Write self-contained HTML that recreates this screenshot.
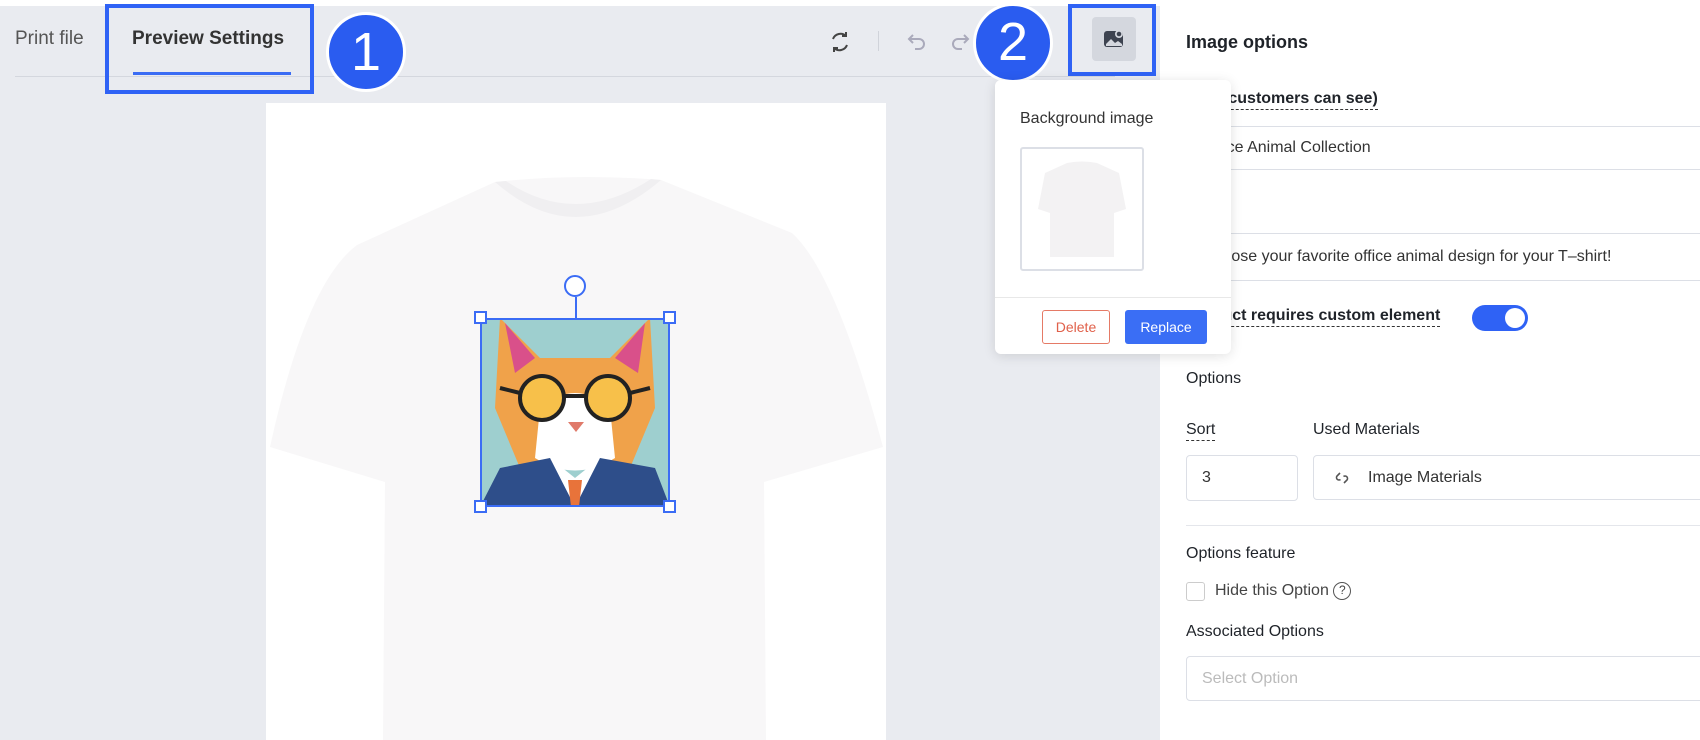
<!DOCTYPE html>
<html><head><meta charset="utf-8"><style>
*{box-sizing:border-box;margin:0;padding:0}
body{width:1700px;height:740px;overflow:hidden;background:#fff;font-family:"Liberation Sans",Arial,sans-serif;position:relative;color:#1f2329}
.a{position:absolute}
.left{left:0;top:6px;width:1160px;height:734px;background:#e9ebf0}
.lbl{font-size:16px;color:#1f2329;position:absolute;white-space:nowrap}
.dash{border-bottom:1px dashed #333;padding-bottom:2px}
.inp{position:absolute;border:1px solid #dcdfe6;border-radius:4px;background:#fff;font-size:16px;color:#333;padding-left:15px;display:flex;align-items:center}
</style></head><body>
<div class="a left"></div>
<div class="lbl" style="left:15px;top:28px;font-size:19px;color:#555">Print file</div>
<div class="lbl" style="left:132px;top:28px;font-size:19px;font-weight:bold;color:#333">Preview Settings</div>
<div class="a" style="left:133px;top:72px;width:158px;height:3px;background:#3a6cf4"></div>
<div class="a" style="left:15px;top:76px;width:1100px;height:1px;background:#d4d7de"></div>
<div class="a" style="left:105px;top:4px;width:209px;height:90px;border:4px solid #2f62f5"></div>
<div class="a" style="left:326px;top:12px;width:80px;height:80px;border-radius:50%;background:#2a5cf0;border:3px solid #fff;color:#fff;font-size:54px;text-align:center;line-height:74px">1</div>
<div class="a" style="left:973px;top:3px;width:80px;height:80px;border-radius:50%;background:#2a5cf0;border:3px solid #fff;color:#fff;font-size:54px;text-align:center;line-height:72px">2</div>
<svg class="a" style="left:828px;top:30px" width="24" height="24" viewBox="0 0 24 24" fill="none" stroke="#444" stroke-width="2"><path d="M5 9a8 8 0 0 1 13-3M19 15a8 8 0 0 1-13 3"/><path d="M18 2v4h-4M6 22v-4h4"/></svg>
<div class="a" style="left:878px;top:31px;width:1px;height:20px;background:#d0d3da"></div>
<svg class="a" style="left:905px;top:30px" width="24" height="24" viewBox="0 0 24 24" fill="none" stroke="#aab" stroke-width="2"><path d="M8 5L4 9l4 4M4 9h10a5 5 0 0 1 0 10h-4"/></svg>
<svg class="a" style="left:948px;top:30px" width="24" height="24" viewBox="0 0 24 24" fill="none" stroke="#aab" stroke-width="2"><path d="M16 5l4 4-4 4M20 9H10a5 5 0 0 0 0 10h4"/></svg>
<div class="a" style="left:1068px;top:4px;width:88px;height:72px;border:4px solid #2f62f5"></div>
<div class="a" style="left:1092px;top:17px;width:44px;height:44px;background:#d4d7de;border-radius:4px"></div>
<svg class="a" style="left:1102px;top:27px" width="24" height="24" viewBox="0 0 24 24"><rect x="2" y="4" width="19" height="16" rx="3" fill="#3d4350"/><path d="M4 17l5-5 4 4 3-2 4 3v2H4z" fill="#d4d7de"/><circle cx="17" cy="7" r="4" fill="#d4d7de"/><circle cx="17" cy="7" r="2.3" fill="#3d4350"/></svg>
<!-- canvas -->
<div class="a" style="left:266px;top:103px;width:620px;height:637px;background:#fff"></div>
<svg class="a" style="left:266px;top:103px" width="620" height="637" viewBox="0 0 620 637">
<path d="M229 79 Q310 70 395 77 L526 130 Q570 170 617 344 L498 379 L500 637 L117 637 L119 379 L4 344 Q40 180 91 142 Z" fill="#f8f7f8"/>
<path d="M229 79 Q310 150 395 77 L385 76 Q310 125 240 78Z" fill="#f0eff1"/>
</svg>
<div class="a" style="left:480px;top:318px;width:190px;height:189px;background:#9ecfcf;overflow:hidden">
<svg width="190" height="189" viewBox="0 0 190 189">
<path d="M20 0 L60 40 L130 40 L170 0 L175 90 L150 150 L40 150 L15 90Z" fill="#f0a24a"/>
<path d="M25 5 L55 40 L35 55Z M165 5 L135 40 L158 55Z" fill="#d9508a"/>
<path d="M60 90 Q95 60 130 90 L135 140 Q95 165 55 140Z" fill="#fff"/>
<circle cx="62" cy="80" r="22" fill="#f7c04a" stroke="#222" stroke-width="4"/>
<circle cx="128" cy="80" r="22" fill="#f7c04a" stroke="#222" stroke-width="4"/>
<path d="M84 78h22M20 70l20 5M170 70l-20 5" stroke="#222" stroke-width="4"/>
<path d="M88 104h16l-8 10z" fill="#e07a6a"/>
<path d="M0 189 L20 150 L70 140 L95 170 L120 140 L175 150 L190 189Z" fill="#2e4e8a"/>
<path d="M70 140 L95 189 L120 140 L95 160Z" fill="#fff"/>
<path d="M88 162h14l-3 27h-8z" fill="#e8733a"/>
</svg></div>
<div class="a" style="left:480px;top:318px;width:190px;height:189px;border:2px solid #3b6cf5"></div>
<div class="a" style="left:575px;top:297px;width:2px;height:21px;background:#3b6cf5"></div>
<div class="a" style="left:564px;top:275px;width:22px;height:22px;border-radius:50%;border:2px solid #3b6cf5;background:#fff"></div>
<div class="a" style="left:474px;top:311px;width:13px;height:13px;border:2px solid #3b6cf5;background:#fff"></div>
<div class="a" style="left:663px;top:311px;width:13px;height:13px;border:2px solid #3b6cf5;background:#fff"></div>
<div class="a" style="left:474px;top:500px;width:13px;height:13px;border:2px solid #3b6cf5;background:#fff"></div>
<div class="a" style="left:663px;top:500px;width:13px;height:13px;border:2px solid #3b6cf5;background:#fff"></div>
<!-- right panel -->
<div class="lbl" style="left:1186px;top:32px;font-size:18px;font-weight:bold">Image options</div>
<div class="lbl" style="left:1186px;top:90px;font-weight:bold"><span class="dash">Title (customers can see)</span></div>
<div class="inp" style="left:1186px;top:126px;width:530px;height:44px">Office Animal Collection</div>
<div class="lbl" style="left:1186px;top:200px"><span class="dash">Tips</span></div>
<div class="inp" style="left:1186px;top:233px;width:530px;height:48px">Choose your favorite office animal design for your T&#8211;shirt!</div>
<div class="lbl" style="left:1186px;top:307px;font-weight:bold"><span class="dash">Product requires custom element</span></div>
<div class="a" style="left:1472px;top:305px;width:56px;height:26px;border-radius:13px;background:#2f62f5"><div class="a" style="right:3px;top:3px;width:20px;height:20px;border-radius:50%;background:#fff"></div></div>
<div class="lbl" style="left:1186px;top:370px">Options</div>
<div class="lbl" style="left:1186px;top:421px"><span class="dash">Sort</span></div>
<div class="lbl" style="left:1313px;top:421px">Used Materials</div>
<div class="inp" style="left:1186px;top:455px;width:112px;height:46px">3</div>
<div class="inp" style="left:1313px;top:455px;width:400px;height:45px;padding-left:18px"><svg width="20" height="20" viewBox="0 0 20 20" fill="none" stroke="#555" stroke-width="1.6" style="margin-right:16px"><path d="M8 5l-3 3a2.5 2.5 0 0 0 3.5 3.5M12 15l3-3a2.5 2.5 0 0 0-3.5-3.5"/></svg>Image Materials</div>
<div class="a" style="left:1186px;top:525px;width:514px;height:1px;background:#e4e6eb"></div>
<div class="lbl" style="left:1186px;top:545px">Options feature</div>
<div class="a" style="left:1186px;top:582px;width:19px;height:19px;border:1px solid #ccc;border-radius:3px"></div>
<div class="lbl" style="left:1215px;top:582px;color:#444">Hide this Option <span style="display:inline-block;width:18px;height:18px;border:1.5px solid #555;border-radius:50%;font-size:12px;text-align:center;line-height:15px;vertical-align:1px">?</span></div>
<div class="lbl" style="left:1186px;top:623px">Associated Options</div>
<div class="inp" style="left:1186px;top:656px;width:530px;height:45px;color:#bbb">Select Option</div>
<!-- popover -->
<div class="a" style="left:995px;top:80px;width:236px;height:274px;background:#fff;border-radius:6px;box-shadow:0 2px 12px rgba(0,0,0,.12)"></div>
<div class="lbl" style="left:1020px;top:110px;color:#333;font-size:16px">Background image</div>
<div class="a" style="left:1020px;top:147px;width:124px;height:124px;border:2px solid #dcdfe6;border-radius:3px;background:#fff">
<svg width="120" height="120" viewBox="0 0 120 120"><path d="M45 14 Q60 11 75 14 L97 24 L104 60 L92 64 L92 108 L28 108 L28 64 L16 60 L23 24Z" fill="#f3f2f3"/></svg></div>
<div class="a" style="left:995px;top:297px;width:236px;height:1px;background:#e8e8e8"></div>
<div class="a" style="left:1042px;top:310px;width:68px;height:34px;border:1px solid #e57a66;border-radius:3px;color:#e0604a;font-size:14px;text-align:center;line-height:32px">Delete</div>
<div class="a" style="left:1125px;top:310px;width:82px;height:34px;background:#3a6ef5;border-radius:3px;color:#fff;font-size:14px;text-align:center;line-height:34px">Replace</div>
</body></html>
